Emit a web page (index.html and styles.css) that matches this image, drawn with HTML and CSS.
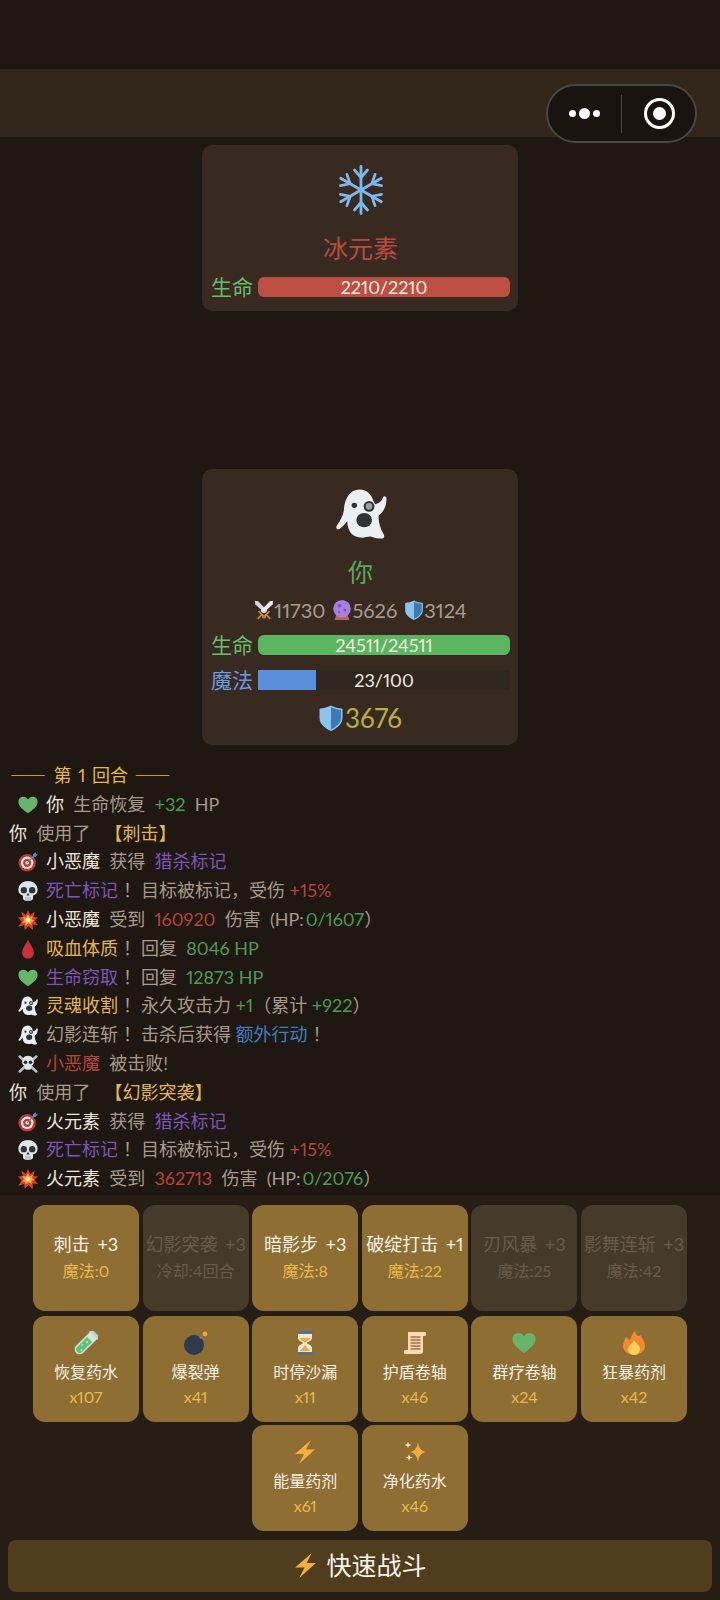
FILE: index.html
```html
<!DOCTYPE html>
<html lang="zh">
<head>
    <meta charset="UTF-8">
    <meta name="viewport" content="width=device-width, initial-scale=1.0">
    <title>战斗</title>
    <link rel="stylesheet" href="styles.css">
</head>
<body>
    <!-- Icon sprite -->
    <svg class="sprite" xmlns="http://www.w3.org/2000/svg">
        <symbol id="i-arm" viewBox="0 0 48 50"><g fill="none" stroke="#7db8ec" stroke-width="2.800" stroke-linecap="round" stroke-linejoin="round"><path d="M24 25V1.500"/><path d="M17.500 5 24 12.500 30.500 5"/></g></symbol>
        <symbol id="i-snow" viewBox="0 0 48 50"><use href="#i-arm" width="48" height="50"/><use href="#i-arm" width="48" height="50" transform="rotate(60 24 25)"/><use href="#i-arm" width="48" height="50" transform="rotate(120 24 25)"/><use href="#i-arm" width="48" height="50" transform="rotate(180 24 25)"/><use href="#i-arm" width="48" height="50" transform="rotate(240 24 25)"/><use href="#i-arm" width="48" height="50" transform="rotate(300 24 25)"/></symbol>
        <symbol id="i-ghost" viewBox="13 9 53 51"><path fill="#eceff1" d="M38 9.500C45 9.500 50 14 52 21L54 24.500C58 24 61 21 62 17.500 63 15.500 65.500 16 65.500 19 65.500 27 62 33 57.500 36 57 43 59.500 50 62.500 55 64 58 63 59.500 60 59.500 55 60 52 58 49 57.500 45 57.500 43 59 39 58.500 35 58 32 57 29.500 54.500 27 51.500 25.500 47 25.500 42 23 45 20 48.500 17 50 14.500 50.500 13.500 48 15 46 19 41 21 36 22 31 22.500 19 28 9.500 38 9.500Z"/><circle cx="32.700" cy="25.700" r="2.800" fill="#2f3439"/><circle cx="47.700" cy="26.700" r="5.500" fill="#2f3439"/><circle cx="47.700" cy="26.700" r="3.400" fill="#9a9fa3"/><ellipse cx="42.700" cy="40.700" rx="8" ry="7.300" fill="#2f3439"/></symbol>
        <symbol id="i-swords" viewBox="0 0 24 24"><path fill="#cfd8dc" d="M1 1 5 1.500 16 13 13 16 1.500 5Z"/><path fill="#eceff1" d="M23 1 19 1.500 8 13 11 16 22.500 5Z"/><g fill="none" stroke="#c9864f" stroke-width="2.200" stroke-linecap="round"><path d="M6 14 13 21"/><path d="M18 14 11 21"/><path d="M5 22 8.500 18.500"/><path d="M19 22 15.500 18.500"/></g></symbol>
        <symbol id="i-ball" viewBox="0 0 24 24"><path fill="#b5675a" d="M5 18H19L21 24H3Z"/><circle cx="12" cy="10.500" r="10.500" fill="#a77fdc"/><circle cx="9" cy="7" r="2.200" fill="#7d55b8"/><circle cx="15.500" cy="12" r="1.800" fill="#7d55b8"/><circle cx="8.500" cy="14.500" r="1.300" fill="#7d55b8"/></symbol>
        <symbol id="i-shield" viewBox="0 0 24 26"><path fill="#8cc4f0" d="M12 .5C8 2.500 4 3.300 1.500 3.500 .8 3.600 .5 4 .5 4.500V13C.5 19 6 23.500 12 26 18 23.500 23.500 19 23.500 13V4.500C23.500 4 23.200 3.600 22.500 3.500 20 3.300 16 2.500 12 .5Z"/><path fill="#3b7cb3" d="M12 2.200C15.500 3.800 19 4.600 22 4.900V13C22 18 17.500 22 12 24.400Z"/></symbol>
        <symbol id="i-heart" viewBox="0 0 24 24"><path fill="#66b56a" d="M12 22C6 17.500 .5 13.500 .5 8 .5 4.300 3.300 2 6.500 2 8.800 2 11 3.300 12 5.500 13 3.300 15.200 2 17.500 2 20.700 2 23.500 4.300 23.500 8 23.500 13.500 18 17.500 12 22Z"/></symbol>
        <symbol id="i-target" viewBox="0 0 24 24"><circle cx="11" cy="13" r="10.500" fill="#c0392f"/><circle cx="11" cy="13" r="7.500" fill="#eceff1"/><circle cx="11" cy="13" r="5" fill="#c0392f"/><circle cx="11" cy="13" r="2.200" fill="#eceff1"/><path d="M11 13 20 4" stroke="#6d8794" stroke-width="1.600"/><path fill="#3f8fd8" d="M18 3 21 0 21.500 2.500 24 3 21 6 18 6Z"/></symbol>
        <symbol id="i-skull" viewBox="0 0 24 24"><path fill="#dfe6ea" d="M12 0C5 0 .5 5 .5 10.500 .5 14.500 2.500 16.500 6 17.500V21C6 23 8 24 12 24 16 24 18 23 18 21V17.500C21.500 16.500 23.500 14.500 23.500 10.500 23.500 5 19 0 12 0Z"/><circle cx="7" cy="11" r="3.800" fill="#2f3439"/><circle cx="17" cy="11" r="3.800" fill="#2f3439"/><path fill="#2f3439" d="M12 14 14 17.500H10Z"/><path stroke="#8a9499" d="M9.500 19V24M12 19V24M14.500 19V24"/></symbol>
        <symbol id="i-boom" viewBox="0 0 24 24"><path fill="#d9402c" d="M12 0 14.500 6 20 2 18.500 8.500 24 9 19.500 13 24 18 17.500 17.500 18 24 12.500 19.500 8 24 7.500 18 0 20 4.500 14 0 9 6 8.500 4 2 9.500 6Z"/><path fill="#f7a93b" d="M12 5 14 9 18 7 16.500 11 20 13 16 14.500 16.500 18 12.500 16 9 19 9 15 5 15.500 7.500 12 5 8.500 9.500 9Z"/><circle cx="12" cy="12" r="2.800" fill="#ffe9a8"/></symbol>
        <symbol id="i-drop" viewBox="0 0 24 24"><path fill="#c8323f" d="M12 1C14 6 19 11 19 16.500 19 20.500 16 23.500 12 23.500 8 23.500 5 20.500 5 16.500 5 11 10 6 12 1Z"/></symbol>
        <symbol id="i-cross" viewBox="0 0 24 24"><g stroke="#b8c2c7" stroke-width="3" stroke-linecap="round"><path d="M2 3 22 21"/><path d="M22 3 2 21"/></g><path fill="#dfe6ea" d="M12 2C7 2 5 6 5 9.500 5 12 6 13.500 8 14.500V17C8 18.500 10 19 12 19 14 19 16 18.500 16 17V14.500C18 13.500 19 12 19 9.500 19 6 17 2 12 2Z"/><circle cx="9" cy="10" r="2.200" fill="#2f3439"/><circle cx="15" cy="10" r="2.200" fill="#2f3439"/></symbol>
        <symbol id="i-tube" viewBox="0 0 24 24"><g transform="rotate(45 12 12)"><rect x="6" y="-2" width="12" height="4" rx="1.500" fill="#b7d5cc"/><path fill="#cfe5dc" d="M7 1H17V21A5 5 0 0 1 7 21Z"/><path fill="#5fc07a" d="M8.500 7H15.500V21A3.500 3.500 0 0 1 8.500 21Z"/><circle cx="12" cy="10.500" r="1.200" fill="#a8e6b8"/><circle cx="10.500" cy="16" r="1.200" fill="#a8e6b8"/><circle cx="13.500" cy="20" r="1" fill="#a8e6b8"/></g></symbol>
        <symbol id="i-bomb" viewBox="0 0 24 24"><circle cx="10" cy="14" r="10" fill="#2f3b4a"/><path d="M16 7.500 20 3.500" stroke="#6d7a85" stroke-width="2.400"/><circle cx="21" cy="3" r="2.400" fill="#f5a33b"/></symbol>
        <symbol id="i-glass" viewBox="0 0 24 24"><path fill="#f2e6cf" d="M5 3H19V7C19 10 14 11 14 12 14 13 19 14 19 17V21H5V17C5 14 10 13 10 12 10 11 5 10 5 7Z"/><path fill="#f5a33b" d="M7 7H17C17 9 12.500 10.500 12 12 11.500 10.500 7 9 7 7ZM12 14 17 20H7Z"/><rect x="4" y="0" width="16" height="3" rx="1.500" fill="#54728a"/><rect x="4" y="21" width="16" height="3" rx="1.500" fill="#54728a"/></symbol>
        <symbol id="i-scroll" viewBox="0 0 24 24"><path fill="#f6dcb0" d="M5 1H22C23.500 1 23.500 5 22 5H20V20C20 22 19 23 17 23H2C.5 23 .5 19 2 19H5Z"/><path stroke="#b5674d" stroke-width="1.400" d="M7.500 6H17.500M7.500 9H17.500M7.500 12H17.500M7.500 15H17.500M7.500 18H17.500"/></symbol>
        <symbol id="i-fire" viewBox="0 0 24 24"><path fill="#f08a2c" d="M13 0C14 5 17 6 19 4 20 8 23 10 23 15 23 20 18 24 12 24 6 24 1 20 1 15 1 11 3 9 4 6 6 7 7 9 8 9 9 6 10 3 13 0Z"/><path fill="#fcd05a" d="M12 9C13 12 18 14 18 18 18 21.500 15 24 12 24 9 24 6 21.500 6 18 6 14 11 13 12 9Z"/></symbol>
        <symbol id="i-bolt" viewBox="0 0 24 24"><path fill="#f6ae3f" d="M18 0 2 14H11L6 24 22 9.500H13Z"/></symbol>
        <symbol id="i-spark" viewBox="0 0 24 24"><path fill="#f6ae3f" d="M15 2C16 8 17.500 10.500 23 12 17.500 13.500 16 16 15 22 14 16 12.500 13.500 7 12 12.500 10.500 14 8 15 2Z"/><path fill="#fde6b8" d="M5 1.500C5.500 4 6 4.500 8.500 5 6 5.500 5.500 6 5 8.500 4.500 6 4 5.500 1.500 5 4 4.500 4.500 4 5 1.500ZM6 14C6.500 16.500 7 17 9.500 17.500 7 18 6.500 18.500 6 21 5.500 18.500 5 18 2.500 17.500 5 17 5.500 16.500 6 14Z"/></symbol>
    </svg>

    <div class="status-bar"></div>
    <div class="nav-bar"></div>

    <!-- Capsule -->
    <div class="capsule">
        <div class="capsule-dots"><i></i><b></b><i></i></div>
        <div class="capsule-line"></div>
        <div class="capsule-target"><span></span></div>
    </div>

    <div class="battle">
        <!-- Monster -->
        <div class="card monster">
            <div class="avatar"><svg class="avatar-snow"><use href="#i-snow"/></svg></div>
            <div class="name red">冰元素</div>
            <div class="bar-row">
                <span class="bar-label green-light">生命</span>
                <div class="bar"><div class="fill fill-red" style="width:100%"></div><span class="bar-text">2210/2210</span></div>
            </div>
        </div>

        <!-- Player -->
        <div class="card">
            <div class="avatar"><svg class="avatar-ghost"><use href="#i-ghost"/></svg></div>
            <div class="name green-name">你</div>
            <div class="stats">
                <svg class="stat-icon"><use href="#i-swords"/></svg>11730
                <svg class="stat-icon"><use href="#i-ball"/></svg>5626
                <svg class="stat-icon"><use href="#i-shield"/></svg>3124
            </div>
            <div class="bar-row">
                <span class="bar-label green-light">生命</span>
                <div class="bar"><div class="fill fill-green" style="width:100%"></div><span class="bar-text">24511/24511</span></div>
            </div>
            <div class="bar-row mp-row">
                <span class="bar-label blue-light">魔法</span>
                <div class="bar bar-square"><div class="fill fill-blue" style="width:23%"></div><span class="bar-text">23/100</span></div>
            </div>
            <div class="armor"><svg class="armor-icon"><use href="#i-shield"/></svg>3676</div>
        </div>
    </div>

    <!-- Battle log -->
    <div class="log">
        <div class="gold round"><span class="dash">——</span> 第 1 回合 <span class="dash">——</span></div>
        <div class="line"><svg class="ico"><use href="#i-heart"/></svg><span class="w">你</span>  生命恢复  <span class="g">+32</span>  HP</div>
        <div><span class="w">你</span>  使用了  <span class="gold skill-tag">【刺击】</span></div>
        <div class="line"><svg class="ico"><use href="#i-target"/></svg><span class="w">小恶魔</span>  获得  <span class="p">猎杀标记</span></div>
        <div class="line"><svg class="ico"><use href="#i-skull"/></svg><span class="p">死亡标记</span><span class="bang">！</span>目标被标记，受伤 <span class="r">+15%</span></div>
        <div class="line"><svg class="ico"><use href="#i-boom"/></svg><span class="w">小恶魔</span>  受到  <span class="r">160920</span>  伤害  (HP:<span class="g hp-num">0/1607</span>）</div>
        <div class="line"><svg class="ico"><use href="#i-drop"/></svg><span class="gold">吸血体质</span><span class="bang">！</span>回复  <span class="g">8046 HP</span></div>
        <div class="line"><svg class="ico"><use href="#i-heart"/></svg><span class="p">生命窃取</span><span class="bang">！</span>回复  <span class="g">12873 HP</span></div>
        <div class="line"><svg class="ico"><use href="#i-ghost"/></svg><span class="gold">灵魂收割</span><span class="bang">！</span>永久攻击力 <span class="g">+1</span>（累计 <span class="g">+922</span>）</div>
        <div class="line"><svg class="ico"><use href="#i-ghost"/></svg>幻影连斩<span class="bang">！</span>击杀后获得 <span class="b">额外行动</span><span class="bang">！</span></div>
        <div class="line"><svg class="ico"><use href="#i-cross"/></svg><span class="r">小恶魔</span>  被击败!</div>
        <div><span class="w">你</span>  使用了  <span class="gold skill-tag">【幻影突袭】</span></div>
        <div class="line"><svg class="ico"><use href="#i-target"/></svg><span class="w">火元素</span>  获得  <span class="p">猎杀标记</span></div>
        <div class="line"><svg class="ico"><use href="#i-skull"/></svg><span class="p">死亡标记</span><span class="bang">！</span>目标被标记，受伤 <span class="r">+15%</span></div>
        <div class="line"><svg class="ico"><use href="#i-boom"/></svg><span class="w">火元素</span>  受到  <span class="r">362713</span>  伤害  (HP:<span class="g hp-num">0/2076</span>）</div>
    </div>

    <!-- Actions -->
    <div class="footer">
        <div class="btn-grid skills">
            <div class="btn"><div class="btn-name">刺击 +3</div><div class="btn-sub">魔法:0</div></div>
            <div class="btn off"><div class="btn-name">幻影突袭 +3</div><div class="btn-sub">冷却:4回合</div></div>
            <div class="btn"><div class="btn-name">暗影步 +3</div><div class="btn-sub">魔法:8</div></div>
            <div class="btn"><div class="btn-name">破绽打击 +1</div><div class="btn-sub">魔法:22</div></div>
            <div class="btn off"><div class="btn-name">刃风暴 +3</div><div class="btn-sub">魔法:25</div></div>
            <div class="btn off"><div class="btn-name">影舞连斩 +3</div><div class="btn-sub">魔法:42</div></div>
        </div>
        <div class="btn-grid">
            <div class="btn item"><svg class="item-icon"><use href="#i-tube"/></svg><div class="item-name">恢复药水</div><div class="btn-sub">x107</div></div>
            <div class="btn item"><svg class="item-icon"><use href="#i-bomb"/></svg><div class="item-name">爆裂弹</div><div class="btn-sub">x41</div></div>
            <div class="btn item"><svg class="item-icon"><use href="#i-glass"/></svg><div class="item-name">时停沙漏</div><div class="btn-sub">x11</div></div>
            <div class="btn item"><svg class="item-icon"><use href="#i-scroll"/></svg><div class="item-name">护盾卷轴</div><div class="btn-sub">x46</div></div>
            <div class="btn item"><svg class="item-icon"><use href="#i-heart"/></svg><div class="item-name">群疗卷轴</div><div class="btn-sub">x24</div></div>
            <div class="btn item"><svg class="item-icon"><use href="#i-fire"/></svg><div class="item-name">狂暴药剂</div><div class="btn-sub">x42</div></div>
            <div class="btn item"><svg class="item-icon"><use href="#i-bolt"/></svg><div class="item-name">能量药剂</div><div class="btn-sub">x61</div></div>
            <div class="btn item"><svg class="item-icon"><use href="#i-spark"/></svg><div class="item-name">净化药水</div><div class="btn-sub">x46</div></div>
        </div>
        <div class="quick"><svg class="quick-icon"><use href="#i-bolt"/></svg>快速战斗</div>
    </div>
</body>
</html>
```
FILE: styles.css
```css
* {
    box-sizing: border-box;
}

body {
    font-family: Lato, "Noto Sans CJK SC", sans-serif;
    font-variant-numeric: proportional-nums;
    background-color: #1e1712;
    color: #a89b8c;
    margin: 0;
    width: 720px;
    height: 1600px;
    overflow: hidden;
    position: relative;
}

.sprite {
    width: 0;
    height: 0;
    display: block;
}

.status-bar {
    height: 69px;
}

.nav-bar {
    height: 68px;
    background-color: #32261b;
}

/* Capsule */
.capsule {
    position: absolute;
    top: 84px;
    left: 546px;
    width: 151px;
    height: 59px;
    border: 2px solid #4b4640;
    border-radius: 30px;
    background-color: #1a1410;
    display: flex;
    align-items: center;
}

.capsule-dots {
    width: 73px;
    display: flex;
    justify-content: center;
    align-items: center;
    gap: 3px;
}

.capsule-dots i {
    width: 7px;
    height: 7px;
    border-radius: 50%;
    background-color: #fff;
}

.capsule-dots b {
    width: 11px;
    height: 11px;
    border-radius: 50%;
    background-color: #fff;
}

.capsule-line {
    width: 1px;
    height: 38px;
    background-color: #4b4640;
}

.capsule-target {
    flex: 1;
    display: flex;
    justify-content: center;
    padding-left: 2px;
}

.capsule-target span {
    width: 31px;
    height: 31px;
    border: 3px solid #fff;
    border-radius: 50%;
    display: flex;
    align-items: center;
    justify-content: center;
}

.capsule-target span::after {
    content: "";
    width: 13px;
    height: 13px;
    border-radius: 50%;
    background-color: #fff;
}

/* Cards */
.battle {
    display: flex;
    flex-direction: column;
    align-items: center;
    gap: 158px;
    padding-top: 8px;
}

.card {
    width: 316px;
    background-color: #382a20;
    border-radius: 10px;
    padding: 20px 8px 15px 9px;
    text-align: center;
}

.monster {
    padding-bottom: 14px;
}

.avatar {
    height: 50px;
    margin-bottom: 17px;
    display: flex;
    justify-content: center;
}

.avatar-snow {
    width: 48px;
    height: 50px;
}

.avatar-ghost {
    width: 52px;
    height: 50px;
}

.name {
    font-size: 25px;
    line-height: 32px;
    padding-bottom: 2px;
}

.red {
    color: #b84a3f;
}

.green-name {
    color: #5aa55e;
}

.green-light {
    color: #6bbb6f;
}

.blue-light {
    color: #6c9be0;
}

.stats {
    margin-top: 6px;
    font-size: 20px;
    line-height: 28px;
    display: flex;
    justify-content: center;
    align-items: center;
    color: #a89b8c;
}

.stat-icon {
    width: 20px;
    height: 20px;
    margin-left: 7px;
}

.stat-icon:first-child {
    margin-left: 0;
}

.bar-row {
    display: flex;
    align-items: center;
    height: 20px;
    margin-top: 11px;
    gap: 5px;
}

.mp-row {
    margin-top: 15px;
}

.bar-label {
    font-size: 21px;
    line-height: 20px;
    width: 42px;
    white-space: nowrap;
}

.bar {
    flex: 1;
    height: 20px;
    background-color: #2f261d;
    border-radius: 6px;
    overflow: hidden;
    position: relative;
}

.bar-square {
    border-radius: 0;
}

.fill {
    height: 100%;
}

.fill-red {
    background-color: #bd4f42;
}

.fill-green {
    background-color: #5cb660;
}

.fill-blue {
    background-color: #5a8fdc;
}

.bar-text {
    position: absolute;
    top: 0;
    left: 0;
    right: 0;
    font-size: 18px;
    line-height: 20px;
    color: #f3ece2;
    text-align: center;
}

.armor {
    margin: 16px 0 1px;
    height: 23px;
    font-size: 26px;
    line-height: 22px;
    color: #b8ad3f;
    display: flex;
    justify-content: center;
    align-items: center;
    gap: 2px;
}

.armor-icon {
    width: 24px;
    height: 26px;
}

/* Log */
.log {
    margin-top: 15px;
    padding-left: 9px;
    height: 435px;
    font-size: 18px;
    line-height: 28.8px;
}

.log > div {
    white-space: pre;
}

.line {
    padding-left: 9px;
}

.round {
    padding-left: 1px;
    word-spacing: 2px;
}

.dash {
    font-family: "Noto Sans CJK SC", sans-serif;
    letter-spacing: 1px;
}

.bang {
    margin-left: 5px;
}

.ico {
    width: 20px;
    height: 20px;
    margin-right: 8px;
    vertical-align: -4px;
}

.hp-num {
    margin-left: 2px;
}

.w {
    color: #ece5da;
}

.g {
    color: #4f9a55;
}

.r {
    color: #b5453c;
}

.p {
    color: #7d55b8;
}

.b {
    color: #3f7fc0;
}

.gold {
    color: #e3b64e;
}

.skill-tag {
    margin-left: 5px;
}

/* Footer */
.footer {
    height: 405px;
    background-color: #261d15;
    padding-top: 10px;
}

.btn-grid {
    display: flex;
    flex-wrap: wrap;
    justify-content: center;
    gap: 3.6px;
}

.skills {
    margin-bottom: 5.4px;
}

.btn {
    width: 106px;
    height: 105.6px;
    background-color: #8f6e33;
    border-radius: 12px;
    display: flex;
    flex-direction: column;
    align-items: center;
    justify-content: center;
    white-space: nowrap;
}

.btn.off {
    background-color: #463a2b;
}

.btn-name {
    font-size: 18px;
    line-height: 27px;
    word-spacing: 3px;
    color: #f7f1e7;
}

.btn-sub {
    font-size: 16px;
    line-height: 26px;
    color: #e8b94f;
}

.btn.off .btn-name,
.btn.off .btn-sub {
    color: #675b4b;
}

.item {
    padding-top: 3px;
}

.item-icon {
    width: 24px;
    height: 24px;
    margin-bottom: 5px;
}

.item-name {
    font-size: 16px;
    line-height: 24px;
    color: #f7f1e7;
}

.quick {
    margin: 9px 8px 0;
    height: 52px;
    padding-bottom: 3px;
    background-color: #4f3d1e;
    border-radius: 8px;
    display: flex;
    align-items: center;
    justify-content: center;
    font-size: 25px;
    color: #f7f1e7;
}

.quick-icon {
    width: 25px;
    height: 25px;
    margin-top: 3px;
    margin-right: 8px;
}
```
